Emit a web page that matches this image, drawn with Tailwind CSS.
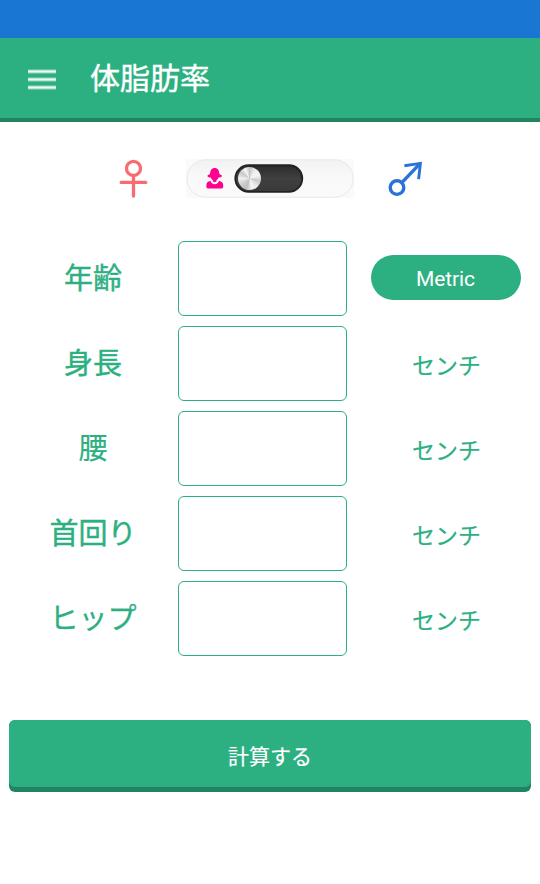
<!DOCTYPE html>
<html lang="ja">
<head>
<meta charset="utf-8">
<title>体脂肪率</title>
<script src="https://cdn.jsdelivr.net/npm/@tailwindcss/browser@4"></script>
</head>
<body class="h-[884px] w-[540px] overflow-hidden bg-white font-['Roboto','Noto_Sans_CJK_JP',sans-serif] text-[#2cb081]">
<div class="h-[38px] bg-[#1976d2]"></div>
<header class="flex h-[84px] items-center border-b-4 border-[#218460] bg-[#2cb081] pl-7 text-white">
  <svg class="mt-[3px] h-[22px] w-7" viewBox="0 0 28 22"><path d="M0 2.5h28M0 10.5h28M0 18.5h28" stroke="#8ed4bb" stroke-width="4"/><path d="M0 2.5h28M0 10.5h28M0 18.5h28" stroke="#f0faf6" stroke-width="2"/></svg>
  <h1 class="ml-[34px] pt-[2px] text-[30px] leading-[44px] [-webkit-text-stroke:0.4px_currentColor]">体脂肪率</h1>
</header>
<section class="flex h-[119px] pt-[37px]">
  <svg class="ml-[119px] h-[39px] w-[29px]" viewBox="0 0 29 39" fill="none" stroke="#f76c72" stroke-width="3.3" stroke-linecap="round"><circle cx="14.5" cy="9.4" r="7"/><path d="M14.5 17v20M2.2 23.4h24.6"/></svg>
  <svg class="ml-[38px] h-[39px] w-[168px]" viewBox="0 0 168 39">
    <defs>
      <linearGradient id="track" x1="0" y1="0" x2="0" y2="1"><stop stop-color="#f2f2f2"/><stop offset=".5" stop-color="#f9f9f9"/><stop offset="1" stop-color="#fafafa"/></linearGradient>
      <linearGradient id="dark" x1="0" y1="0" x2="0" y2="1"><stop stop-color="#2b2b2b"/><stop offset=".5" stop-color="#404040"/><stop offset="1" stop-color="#393939"/></linearGradient>
    </defs>
    <rect width="168" height="39" fill="#fafafa"/>
    <rect x="1" y=".8" width="166.3" height="37.4" rx="18.7" fill="url(#track)" stroke="#e8e8e8"/>
    <path fill="#ff0090" d="M28.7 9c3.3 0 4.3 2.4 4.6 5.6.1 1.1 2.7 1.3 2.7 2.3 0 .9-1.5 1.4-3.3 1.6-.4 1.2-1.2 2.1-2.2 2.7v1.3l-1.8.7-1.8-.7v-1.3c-1-.6-1.8-1.5-2.2-2.7-1.8-.2-3.3-.7-3.3-1.6 0-1 2.6-1.2 2.7-2.3.3-3.2 1.3-5.6 4.6-5.6z"/>
    <path fill="#ff0090" d="M24.4 21.7c.7 2.2 2.1 3.6 4.3 3.6s3.6-1.4 4.3-3.6c2.8.8 4.2 1.9 4.2 4.1v2q0 1.6-1.6 1.6H22q-1.6 0-1.6-1.6v-2c0-2.2 1.2-3.3 4-4.1z"/>
    <rect x="49.3" y="6.1" width="67" height="26.8" rx="13.4" fill="url(#dark)" stroke="#222" stroke-width="1.8"/>
    <path d="M63 7h40q12.5 0 12.5 12.5" fill="none" stroke="#222" stroke-width="2" opacity=".45"/>
    <foreignObject x="52" y="7.7" width="24" height="24"><div class="h-[23px] w-[23px] rounded-full bg-[conic-gradient(#c5c5c5,#eee_10%,#f3f3f3_20%,#c9c9c9_29%,#e8e8e8_38%,#f4f4f4_46%,#bfbfbf_55%,#d2d2d2_66%,#eee_75%,#c9c9c9_85%,#f6f6f6_93%,#c5c5c5)]"></div></foreignObject>
  </svg>
  <svg class="ml-[34px] h-[39px] w-[36px]" viewBox="0 0 36 39" fill="none" stroke="#2b72d8" stroke-width="3.4"><circle cx="9" cy="28.6" r="6.8"/><path d="M14.3 23.2L31.5 5.2"/><path d="M16.4 6.8L32.4 4.4 30.6 20.2" stroke-width="2.9"/></svg>
</section>
<main class="grid grid-cols-[178px_169px_193px] gap-y-[10px]">
  <div class="flex h-[75px] items-center justify-center pl-2 pt-[3px] text-[29px] [-webkit-text-stroke:0.4px_currentColor]">年齢</div>
  <div class="rounded-md border border-[#2cb081]"></div>
  <div class="ml-6 mt-[14px] flex h-[45px] w-[150px] items-center justify-center rounded-full bg-[#2cb081] pr-px pt-[4px] text-[21px] tracking-[-0.1px] text-white">Metric</div>

  <div class="flex h-[75px] items-center justify-center pl-2 pt-[3px] text-[29px] [-webkit-text-stroke:0.4px_currentColor]">身長</div>
  <div class="rounded-md border border-[#2cb081]"></div>
  <div class="flex items-center pl-[65px] pt-[7px] text-[23px] [-webkit-text-stroke:0.2px_currentColor]">センチ</div>

  <div class="flex h-[75px] items-center justify-center pl-2 pt-[3px] text-[29px] [-webkit-text-stroke:0.2px_currentColor]">腰</div>
  <div class="rounded-md border border-[#2cb081]"></div>
  <div class="flex items-center pl-[65px] pt-[7px] text-[23px] [-webkit-text-stroke:0.2px_currentColor]">センチ</div>

  <div class="flex h-[75px] items-center justify-center pl-2 pt-[3px] text-[29px] [-webkit-text-stroke:0.4px_currentColor]">首回り</div>
  <div class="rounded-md border border-[#2cb081]"></div>
  <div class="flex items-center pl-[65px] pt-[7px] text-[23px] [-webkit-text-stroke:0.2px_currentColor]">センチ</div>

  <div class="flex h-[75px] items-center justify-center pl-2 pt-[3px] text-[29px] [-webkit-text-stroke:0.3px_currentColor]">ヒップ</div>
  <div class="rounded-md border border-[#2cb081]"></div>
  <div class="flex items-center pl-[65px] pt-[7px] text-[23px] [-webkit-text-stroke:0.2px_currentColor]">センチ</div>
</main>
<div class="mx-[9px] mt-16 h-[72px] rounded-md bg-[#218460] pb-[5px]">
  <button class="flex h-[67px] w-full items-center justify-center rounded-md bg-[#2cb081] pt-[8px] text-[21px] text-white [-webkit-text-stroke:0.2px_currentColor]">計算する</button>
</div>
</body>
</html>
